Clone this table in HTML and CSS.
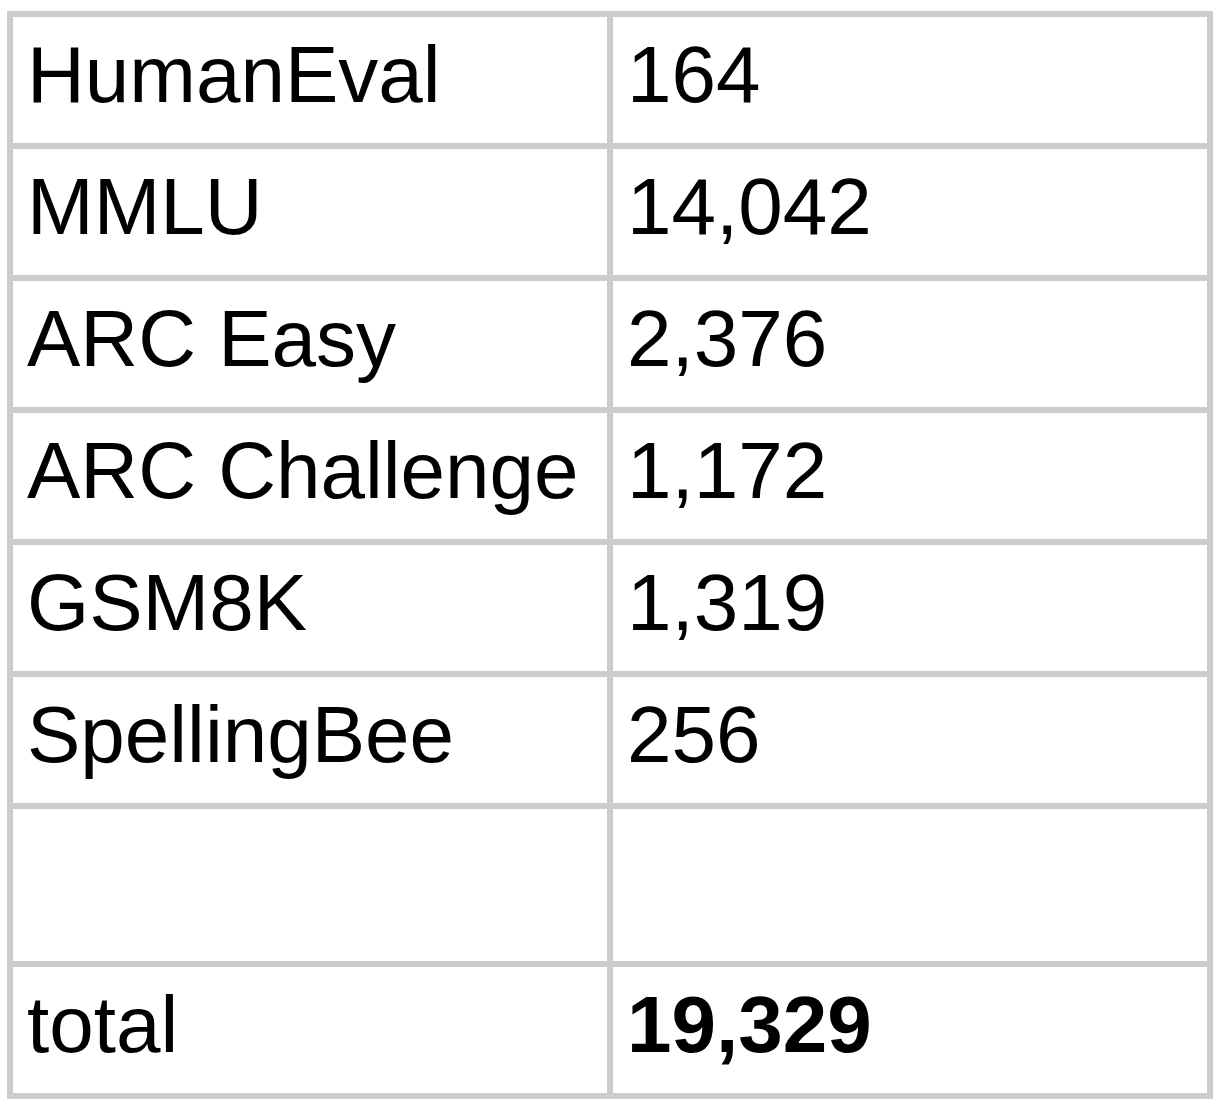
FILE: index.html
```html
<!DOCTYPE html>
<html>
<head>
<meta charset="utf-8">
<link rel="stylesheet" href="styles.css">
</head>
<body>
<table class="counts">
  <tbody>
    <tr><td>HumanEval</td><td>164</td></tr>
    <tr><td>MMLU</td><td>14,042</td></tr>
    <tr><td>ARC Easy</td><td>2,376</td></tr>
    <tr><td>ARC Challenge</td><td>1,172</td></tr>
    <tr><td>GSM8K</td><td>1,319</td></tr>
    <tr><td>SpellingBee</td><td>256</td></tr>
    <tr class="blank"><td><div class="spacer"></div></td><td><div class="spacer"></div></td></tr>
    <tr><td>total</td><td class="sum">19,329</td></tr>
  </tbody>
</table>
</body>
</html>
```

FILE: styles.css
```css
html, body {
  margin: 0;
  padding: 0;
  background: #ffffff;
}

body {
  padding: 11px 0 0 7px;
  font-family: "Liberation Sans", Arial, sans-serif;
  color: #000000;
}

.counts {
  border-collapse: separate;
  border-spacing: 0;
  border-top: 6px solid #cccccc;
  border-left: 6px solid #cccccc;
}

.counts td {
  width: 566px;
  padding: 12px 14px 22px 14px;
  border-right: 6px solid #cccccc;
  border-bottom: 6px solid #cccccc;
  font-size: 80px;
  line-height: 92px;
  vertical-align: top;
  white-space: nowrap;
}

.counts .blank td {
  padding: 0 14px;
}

.spacer {
  height: 152px;
}

.counts .sum {
  font-weight: bold;
}
```
